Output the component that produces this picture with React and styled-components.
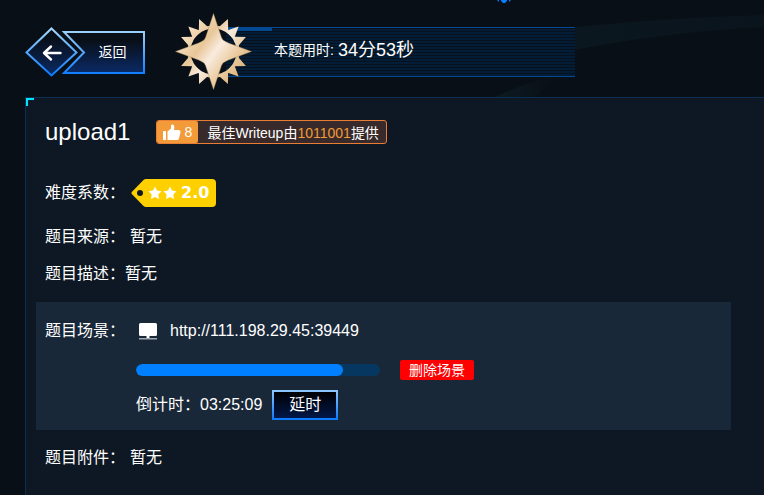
import React from "react";
import styled, { createGlobalStyle, css } from "styled-components";

const GlobalStyle = createGlobalStyle`
  * { box-sizing: border-box; }
  body {
    margin: 0;
    background: #090f16;
    color: #fff;
    font: 16px/24px "Liberation Sans", "Noto Sans CJK SC", sans-serif;
  }
  button { font: inherit; color: inherit; cursor: pointer; }
`;

const Page = styled.div`
  position: relative;
  display: flex;
  flex-direction: column;
  min-height: 100vh;
  overflow: hidden;
`;

const Backdrop = styled.svg`
  position: absolute;
  inset: 0;
  width: 100%;
  height: 100%;
  pointer-events: none;
`;

const TopOrnament = styled.svg`
  position: absolute;
  top: 0;
  left: 65%;
  width: 15px;
  height: 3px;
`;

const Header = styled.header`
  position: relative;
  display: flex;
  align-items: center;
  gap: 29px;
  padding: 13px 25px 7px;
`;

const BackButton = styled.button`
  position: relative;
  width: 121px;
  height: 50px;
  padding: 0 0 0 54px;
  border: 0;
  background: none;
  font-size: 14px;
  line-height: 20px;
  text-align: center;
`;

const BackFrame = styled.svg`
  position: absolute;
  inset: 0;
`;

const BackLabel = styled.span`
  position: relative;
`;

const Timer = styled.div`
  display: flex;
  align-items: center;
  flex: 0 1 400px;
`;

const Emblem = styled.svg`
  position: relative;
  z-index: 1;
  flex: none;
  width: 77px;
  height: 77px;
  margin-right: -26px;
`;

const TimerBand = styled.div`
  flex: 1;
  display: flex;
  align-items: center;
  gap: 4px;
  height: 50px;
  padding: 0 0 4px 48px;
  border: solid #044a92;
  border-width: 1px 0;
  font-size: 14px;
  white-space: nowrap;
  background:
    linear-gradient(#044a92, #044a92) 0 0 / 46px 3px no-repeat,
    repeating-linear-gradient(#06111d 0 1px, #031d36 1px 3px);
`;

const Elapsed = styled.span`
  font-size: 18px;
`;

const Panel = styled.main`
  position: relative;
  flex: 1;
  margin-left: 25px;
  padding-top: 22px;
  border: solid #0b2f50;
  border-width: 1px 0 0 1px;
  background: #0d1824;
`;

const Corner = styled.span`
  position: absolute;
  top: 0;
  left: 0;
  width: 8px;
  height: 8px;
  border: solid #00e5ff;
  border-width: 2px 0 0 2px;
`;

const TitleRow = styled.div`
  display: flex;
  align-items: center;
  gap: 26px;
  height: 24px;
  margin-bottom: 35px;
  padding-left: 19px;
`;

const Title = styled.h1`
  margin: 0;
  font-size: 24px;
  font-weight: 400;
  line-height: 24px;
`;

const Writeup = styled.div`
  display: flex;
  height: 24px;
  border: 1px solid #ea7d36;
  border-radius: 3px;
  background: #382a2a;
  font-size: 14px;
  line-height: 24px;
  white-space: nowrap;
`;

const LikeButton = styled.button`
  display: flex;
  align-items: center;
  gap: 3px;
  width: 41px;
  padding: 0 0 0 6px;
  border: 0;
  border-radius: 2px;
  background: #f29b38;
`;

const WriteupText = styled.span`
  padding: 0 7px 0 9px;
`;

const AuthorLink = styled.a`
  color: #f29b38;
  text-decoration: none;
`;

const Row = styled.div`
  display: flex;
  align-items: center;
  min-height: 24px;
  gap: ${(p) => p.$gap ?? 5}px;
  padding-left: 19px;
  margin-bottom: ${(p) => p.$after ?? 0}px;
`;

const Label = styled.span`
  flex: none;
`;

const DifficultyTag = styled.span`
  display: flex;
  height: 28px;
`;

const TagBody = styled.span`
  display: flex;
  align-items: center;
  padding-right: 7px;
  border-radius: 0 4px 4px 0;
  background: #ffd000;
  font: bold 16px/28px "DejaVu Sans", sans-serif;
`;

const TagStars = styled.svg`
  margin-right: 3px;
`;

const Scene = styled.section`
  display: grid;
  grid-template-columns: 91px minmax(0, 1fr);
  margin: 0 33px 16px 10px;
  padding: 17px 0 10px 9px;
  background: #192839;
`;

const SceneDetails = styled.div`
  display: flex;
  flex-direction: column;
`;

const sceneLine = css`
  display: flex;
  align-items: center;
`;

const AddressLine = styled.div`
  ${sceneLine}
  gap: 12px;
  height: 24px;
  padding-left: 2px;
  margin-bottom: 17px;
`;

const AddressLink = styled.a`
  color: #fff;
  text-decoration: none;
`;

const ProgressLine = styled.div`
  ${sceneLine}
  gap: 20px;
  margin-bottom: 10px;
`;

const TimeProgress = styled.progress`
  appearance: none;
  flex: 0 1 244px;
  height: 12px;
  border: 0;
  border-radius: 6px;
  overflow: hidden;
  background: #063761;
  &::-webkit-progress-bar { background: #063761; border-radius: 6px; }
  &::-webkit-progress-value { background: #0080ff; border-radius: 6px; }
`;

const DeleteButton = styled.button`
  height: 20px;
  padding: 0 9px;
  border: 0;
  border-radius: 2px;
  background: #f00;
  font-size: 14px;
  line-height: 20px;
`;

const CountdownLine = styled.div`
  ${sceneLine}
  gap: 10px;
`;

const ExtendButton = styled.button`
  width: 66px;
  height: 30px;
  padding: 0;
  border: 2px solid;
  border-image: linear-gradient(#8cc5ff, #0a7cff) 1;
  background: linear-gradient(#000004, #021848);
  line-height: 26px;
`;

const polar = (radius, degrees) => {
  const a = (degrees * Math.PI) / 180;
  return `${(radius * Math.cos(a)).toFixed(2)} ${(radius * Math.sin(a)).toFixed(2)}`;
};

const TEETH = [0, 90, 180, 270].flatMap((q) => [24, 45, 66].map((a) => q + a));

function StarEmblem() {
  return (
    <Emblem viewBox="-38.5 -38.5 77 77" aria-hidden="true">
      <defs>
        <linearGradient id="gold" gradientUnits="userSpaceOnUse" x1="-26" y1="-20" x2="26" y2="20">
          <stop offset="0" stopColor="#f4dfc0" />
          <stop offset="0.3" stopColor="#e8c698" />
          <stop offset="0.52" stopColor="#f9ebde" />
          <stop offset="0.78" stopColor="#ebcda3" />
          <stop offset="1" stopColor="#dfb780" />
        </linearGradient>
      </defs>
      <g fill="url(#gold)">
        {TEETH.map((a) => (
          <path key={a} d={`M${polar(35.5, a)} L${polar(25.5, a + 11)} L${polar(23, a)} L${polar(25.5, a - 11)} Z`} />
        ))}
      </g>
      <circle r="24.5" fill="none" stroke="url(#gold)" strokeWidth="3" />
      <path
        fill="url(#gold)"
        stroke="#9b8052"
        strokeWidth="0.4"
        d="M0-38 8-14 Q9-11 12-10 L15-8.500 38 0 15 8.500 12 10 Q9 11 8 14 L0 38-8 14 Q-9 11-12 10 L-15 8.500-38 0-15-8.500-12-10 Q-9-11-8-14Z"
      />
    </Emblem>
  );
}

function BackArt() {
  return (
    <BackFrame width="121" height="50" viewBox="0 0 121 50" aria-hidden="true">
      <defs>
        <linearGradient id="edge" gradientUnits="userSpaceOnUse" x1="0" y1="2" x2="0" y2="48">
          <stop offset="0" stopColor="#a4d5fa" />
          <stop offset="1" stopColor="#0a7cff" />
        </linearGradient>
        <linearGradient id="fill" x1="0" y1="0" x2="0" y2="1">
          <stop offset="0.2" stopColor="#090f18" />
          <stop offset="1" stopColor="#0a2a65" />
        </linearGradient>
      </defs>
      <g fill="url(#fill)" stroke="url(#edge)" strokeWidth="2">
        <path d="M39 5H119V46H39L59 25.500Z" />
        <path d="M26.500 1.500 51.500 25.500 26.500 48.500 1.500 25.500Z" />
      </g>
      <path d="M35.500 26H19M26 19.500 19 26 26 32.500" fill="none" stroke="#fff" strokeWidth="2.400" strokeLinecap="round" strokeLinejoin="round" />
    </BackFrame>
  );
}

function Field({ label, gap, after, children }) {
  return (
    <Row $gap={gap} $after={after}>
      <Label>{label}</Label>
      {children}
    </Row>
  );
}

const STAR = "M0-6.500 2-2.400 6.500-1.700 3.300 1.500 4 6 0 3.900-4 6-3.300 1.500-6.500-1.700-2-2.400Z";

export default function App() {
  return (
    <>
      <GlobalStyle />
      <Page>
        <Backdrop viewBox="0 0 764 495" preserveAspectRatio="none" aria-hidden="true">
          <defs>
            <linearGradient id="streak" x1="0" y1="0" x2="1" y2="0">
              <stop offset="0" stopColor="#12303a" stopOpacity="0" />
              <stop offset="0.5" stopColor="#12303a" stopOpacity="0.25" />
              <stop offset="1" stopColor="#0b2838" stopOpacity="0.2" />
            </linearGradient>
            <linearGradient id="glint" x1="0" y1="0" x2="1" y2="0">
              <stop offset="0" stopColor="#12303a" stopOpacity="0.35" />
              <stop offset="1" stopColor="#12303a" stopOpacity="0" />
            </linearGradient>
          </defs>
          <path d="M350 60Q560 20 764 15V27Q620 34 490 70Z" fill="url(#streak)" />
          <path d="M494 98Q520 84 555 77L535 98Z" fill="url(#glint)" />
        </Backdrop>
        <TopOrnament viewBox="0 0 15 3" aria-hidden="true">
          <path d="M4 0H10V1L8 3H6L4 1ZM0 0H2V2ZM12 0H14L12 2Z" fill="#0a7cff" />
        </TopOrnament>

        <Header>
          <BackButton type="button">
            <BackArt />
            <BackLabel>返回</BackLabel>
          </BackButton>
          <Timer>
            <StarEmblem />
            <TimerBand>
              <span>本题用时:</span>
              <Elapsed>34分53秒</Elapsed>
            </TimerBand>
          </Timer>
        </Header>

        <Panel>
          <Corner />
          <TitleRow>
            <Title>upload1</Title>
            <Writeup>
              <LikeButton type="button" aria-label="8">
                <svg width="18" height="17" viewBox="0 0 18 17" fill="#fff" aria-hidden="true">
                  <path d="M0 7.500Q0 7 1 7H3V16H1Q0 16 0 15ZM4.500 7.500 8 4.500V1.500Q8.500 0 10 0.500 12 1.500 11 6H16Q17.800 6.300 17.500 8L16 14.500Q15.500 16 14 16H4.500Z" />
                </svg>
                <span>8</span>
              </LikeButton>
              <WriteupText>
                最佳Writeup由<AuthorLink href="#author">1011001</AuthorLink>提供
              </WriteupText>
            </Writeup>
          </TitleRow>

          <Field label="难度系数：" gap={6} after={18}>
            <DifficultyTag>
              <svg width="15" height="28" viewBox="0 0 15 28" aria-hidden="true">
                <path d="M15 0V28Q13.500 28 12.500 27L0.800 15Q0 14 0.800 13L12.500 1Q13.500 0 15 0Z" fill="#ffd000" />
                <circle cx="9" cy="14" r="3" fill="#0d1824" />
              </svg>
              <TagBody>
                <TagStars width="32" height="28" viewBox="0 0 32 28" fill="#fff" aria-hidden="true">
                  <path transform="translate(9 14)" d={STAR} />
                  <path transform="translate(24 14)" d={STAR} />
                </TagStars>
                2.0
              </TagBody>
            </DifficultyTag>
          </Field>
          <Field label="题目来源：" after={13}>暂无</Field>
          <Field label="题目描述：" gap={0} after={16}>暂无</Field>

          <Scene>
            <Label>题目场景：</Label>
            <SceneDetails>
              <AddressLine>
                <svg width="20" height="18" viewBox="0 0 20 18" aria-hidden="true">
                  <rect x="1" y="1" width="18" height="13" rx="1.500" fill="#fff" />
                  <path d="M8.500 14H11.500V16H8.500Z" fill="#fff" />
                  <path d="M1 16H19V17.500H1Z" fill="#a3a9b0" />
                </svg>
                <AddressLink href="http://111.198.29.45:39449">http://111.198.29.45:39449</AddressLink>
              </AddressLine>
              <ProgressLine>
                <TimeProgress value={85} max={100} aria-label="倒计时" />
                <DeleteButton type="button">删除场景</DeleteButton>
              </ProgressLine>
              <CountdownLine>
                <span>倒计时：03:25:09</span>
                <ExtendButton type="button">延时</ExtendButton>
              </CountdownLine>
            </SceneDetails>
          </Scene>

          <Field label="题目附件：">暂无</Field>
        </Panel>
      </Page>
    </>
  );
}
